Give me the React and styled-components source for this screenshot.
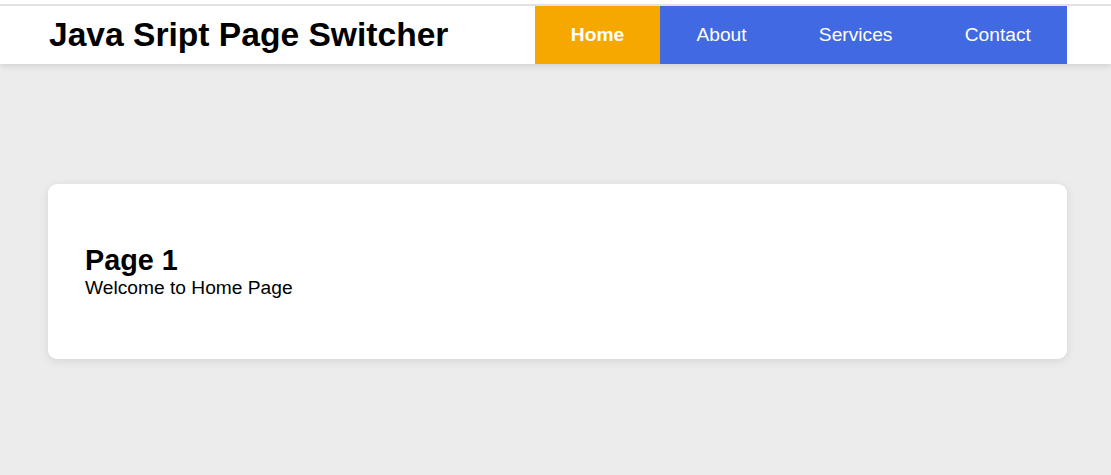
import React, { useState } from "react";
import styled, { createGlobalStyle } from "styled-components";

const GlobalStyle = createGlobalStyle`
  html, body {
    margin: 0;
    padding: 0;
  }
  body {
    background: #ececec;
    font-family: "Liberation Sans", Arial, sans-serif;
    min-height: 475px;
  }
`;

const Header = styled.header`
  background: #ffffff;
  padding-top: 4px;
  box-shadow: 0 2px 6px rgba(0, 0, 0, 0.12);
`;

const HeaderBar = styled.div`
  border-top: 2px solid #e2e2e2;
  height: 58px;
`;

const HeaderInner = styled.div`
  width: 1019px;
  margin-left: 48px;
  height: 100%;
  display: flex;
  align-items: stretch;
  justify-content: space-between;
`;

const Title = styled.h1`
  margin: 0;
  display: flex;
  align-items: center;
  font-size: 33.6px;
  font-weight: 700;
  color: #000;
  padding-left: 1px;
`;

const Nav = styled.nav`
  display: flex;
  align-items: stretch;
  background: #4169e1;
`;

const NavItem = styled.button`
  border: none;
  margin: 0;
  padding: 0 36.15px;
  font-family: inherit;
  font-size: 19.2px;
  color: #ffffff;
  cursor: pointer;
  background: ${(p) => (p.$active ? "#f6a800" : "#4169e1")};
  font-weight: ${(p) => (p.$active ? 700 : 400)};
  display: flex;
  align-items: center;
`;

const Main = styled.main`
  width: 1019px;
  margin-left: 48px;
  padding-top: 120px;
`;

const Card = styled.section`
  background: #ffffff;
  border-radius: 9px;
  box-shadow: 0 2px 10px rgba(0, 0, 0, 0.1);
  padding: 60px 37px;
`;

const PageTitle = styled.h2`
  margin: 0;
  font-size: 28.8px;
  font-weight: 700;
  color: #000;
`;

const PageText = styled.p`
  margin: 0;
  font-size: 19.2px;
  color: #000;
`;

const pages = [
  { name: "Home", title: "Page 1", text: "Welcome to Home Page" },
  { name: "About", title: "Page 2", text: "Welcome to About Page" },
  { name: "Services", title: "Page 3", text: "Welcome to Services Page" },
  { name: "Contact", title: "Page 4", text: "Welcome to Contact Page" },
];

export default function App() {
  const [active, setActive] = useState(0);
  const page = pages[active];
  return (
    <>
      <GlobalStyle />
      <Header>
        <HeaderBar>
          <HeaderInner>
            <Title>Java Sript Page Switcher</Title>
            <Nav>
              {pages.map((p, i) => (
                <NavItem key={p.name} $active={i === active} onClick={() => setActive(i)}>
                  {p.name}
                </NavItem>
              ))}
            </Nav>
          </HeaderInner>
        </HeaderBar>
      </Header>
      <Main>
        <Card>
          <PageTitle>{page.title}</PageTitle>
          <PageText>{page.text}</PageText>
        </Card>
      </Main>
    </>
  );
}
